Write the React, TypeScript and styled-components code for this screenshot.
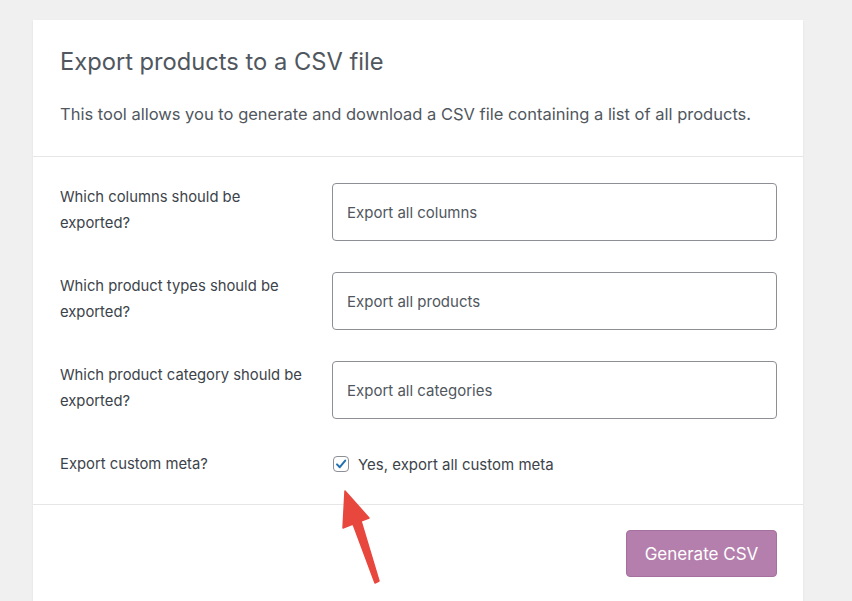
import React from 'react'
import styled, { createGlobalStyle } from 'styled-components'

const GlobalStyle = createGlobalStyle`
  html, body {
    margin: 0;
    padding: 0;
    background: #f0f0f0;
    font-family: Inter, "Noto Sans", "Liberation Sans", sans-serif;
    -webkit-font-smoothing: antialiased;
  }
`

const Page = styled.div`
  position: relative;
  width: 852px;
  height: 601px;
  overflow: hidden;
  padding: 20px 0 0 33px;
  box-sizing: border-box;
`

const Card = styled.div`
  width: 770px;
  background: #fff;
  box-shadow: 0 1px 2px rgba(0, 0, 0, 0.08);
`

const Header = styled.div`
  padding: 26px 27px 30px;
  border-bottom: 1px solid #e6e6e6;
`

const Title = styled.h2`
  margin: 0;
  font-size: 23.7px;
  line-height: 31px;
  font-weight: 400;
  color: #50575e;
`

const Description = styled.p`
  margin: 25px 0 0;
  font-size: 16.5px;
  line-height: 24px;
  color: #50575e;
`

const Form = styled.div`
  display: grid;
  grid-template-columns: 248px 1fr;
  column-gap: 24px;
  row-gap: 31px;
  padding: 26px 26px 27px 27px;
  border-bottom: 1px solid #e6e6e6;
`

const Label = styled.div`
  font-size: 14.8px;
  line-height: 26px;
  padding-top: 1px;
  color: #3c434a;
`

const Select = styled.div`
  height: 58px;
  box-sizing: border-box;
  border: 1px solid #8c8f94;
  border-radius: 4px;
  display: flex;
  align-items: center;
  padding: 0 14px;
  font-size: 15px;
  color: #50575e;
`

const CheckRow = styled.label`
  display: flex;
  align-items: center;
  gap: 9px;
  height: 26px;
  padding-top: 1px;
  font-size: 15px;
  color: #3c434a;
`

const Box = styled.span`
  width: 16px;
  height: 16px;
  box-sizing: border-box;
  border: 1px solid #8c8f94;
  border-radius: 4px;
  display: flex;
  align-items: center;
  justify-content: center;
  margin-left: 1px;
`

const Footer = styled.div`
  display: flex;
  justify-content: flex-end;
  padding: 25px 26px 40px;
`

const Button = styled.button`
  width: 151px;
  height: 47px;
  border: 1px solid #a56f9e;
  border-radius: 4px;
  background: #b47fad;
  color: #fff;
  font-family: inherit;
  font-size: 17px;
  cursor: pointer;
`

const Overlay = styled.svg`
  position: absolute;
  left: 0;
  top: 0;
  pointer-events: none;
`

const rows = [
  { label: 'Which columns should be exported?', value: 'Export all columns' },
  { label: 'Which product types should be exported?', value: 'Export all products' },
  { label: 'Which product category should be exported?', value: 'Export all categories' },
]

export default function App() {
  return (
    <Page>
      <GlobalStyle />
      <Card>
        <Header>
          <Title>Export products to a CSV file</Title>
          <Description>
            This tool allows you to generate and download a CSV file containing a list of all products.
          </Description>
        </Header>
        <Form>
          {rows.map(r => (
            <React.Fragment key={r.label}>
              <Label>{r.label}</Label>
              <Select>{r.value}</Select>
            </React.Fragment>
          ))}
          <Label>Export custom meta?</Label>
          <CheckRow>
            <Box>
              <svg width="12" height="12" viewBox="0 0 12 12">
                <path d="M2 6.4 L4.8 9.2 L10.2 2.6" fill="none" stroke="#2271b1" strokeWidth="2" strokeLinecap="round" strokeLinejoin="round" />
              </svg>
            </Box>
            Yes, export all custom meta
          </CheckRow>
        </Form>
        <Footer>
          <Button>Generate CSV</Button>
        </Footer>
      </Card>
      <Overlay width="852" height="601" viewBox="0 0 852 601">
        <polygon
          points="345,491 369,518 361,521 379,581 375,583 353,524 343,528"
          fill="#e8473e"
          stroke="#e8473e"
          strokeWidth="1.5"
          strokeLinejoin="round"
        />
      </Overlay>
    </Page>
  )
}
